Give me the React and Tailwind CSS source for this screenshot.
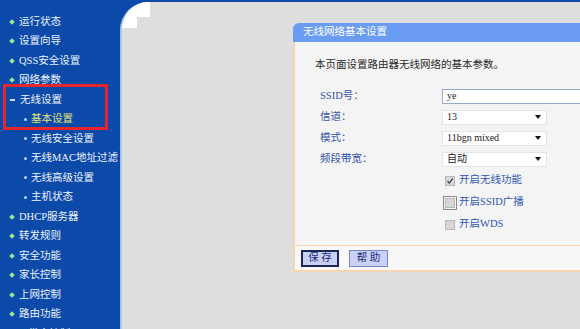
import React from 'react';

const menu = [
  { label: '运行状态', kind: 'top' },
  { label: '设置向导', kind: 'top' },
  { label: 'QSS安全设置', kind: 'top' },
  { label: '网络参数', kind: 'top' },
  { label: '无线设置', kind: 'open' },
  { label: '基本设置', kind: 'sub', active: true },
  { label: '无线安全设置', kind: 'sub' },
  { label: '无线MAC地址过滤', kind: 'sub' },
  { label: '无线高级设置', kind: 'sub' },
  { label: '主机状态', kind: 'sub' },
  { label: 'DHCP服务器', kind: 'top' },
  { label: '转发规则', kind: 'top' },
  { label: '安全功能', kind: 'top' },
  { label: '家长控制', kind: 'top' },
  { label: '上网控制', kind: 'top' },
  { label: '路由功能', kind: 'top' },
  { label: 'IP带宽控制', kind: 'top' },
];

const font = { fontFamily: '"Liberation Serif", "Noto Sans CJK SC", serif' };

const MenuItem = ({ item }) => {
  const isSub = item.kind === 'sub';
  return (
    <div className={`flex items-center h-[19.5px] ${isSub ? 'pl-[24px] gap-[4px]' : 'pl-[10px] gap-[5px]'}`}>
      {item.kind === 'open' && <span className="w-[5px] h-[1.5px] bg-[#cfe0ff]" />}
      {item.kind === 'top' && <span className="w-[4px] h-[4px] rotate-45 bg-[#9ee29a]" />}
      {isSub && <span className="w-[3px] h-[3px] rounded-full bg-[#b9d2f2]" />}
      <span className={`text-[10.5px] leading-none whitespace-nowrap ${item.active ? 'text-[#e2e47a]' : 'text-[#eef3ff]'}`}>
        {item.label}
      </span>
    </div>
  );
};

const Select = ({ value }) => (
  <div className="w-[105px] h-[15px] bg-white border border-[#e4e4e4] flex items-center justify-between pl-[4px] pr-[5px]">
    <span className="text-[10px] leading-none text-[#222]">{value}</span>
    <span className="w-0 h-0 border-l-[3px] border-r-[3px] border-t-[4px] border-l-transparent border-r-transparent border-t-[#111]" />
  </div>
);

const Row = ({ label, children }) => (
  <div className="flex items-center h-[21px]">
    <div className="w-[126px] pl-[4px] text-[10.5px] leading-none text-[#3454aa]">{label}</div>
    {children}
  </div>
);

const Check = ({ label, checked, focused }) => (
  <div className="flex items-center h-[22px] pl-[126px]">
    <div className={`w-[14px] h-[14px] flex items-center justify-center ${focused ? 'border border-[#8a8a8a]' : ''}`}>
      <div className="w-[10px] h-[10px] bg-[#d6d6d6] border border-[#b8b8b8] flex items-center justify-center">
        {checked && (
          <svg width="8" height="8" viewBox="0 0 8 8">
            <path d="M1.5 4.2 L3.2 6 L6.6 1.6" stroke="#333" strokeWidth="1.2" fill="none" />
          </svg>
        )}
      </div>
    </div>
    <span className="ml-[2px] text-[10.5px] leading-none text-[#2f55b5] whitespace-nowrap">{label}</span>
  </div>
);

export default function App() {
  return (
    <div className="w-[580px] h-[329px] overflow-hidden flex bg-[#0b4aa8] relative" style={font}>
      {/* Sidebar */}
      <div className="w-[120px] shrink-0 pt-[12px]">
        {menu.map((m) => (
          <MenuItem key={m.label} item={m} />
        ))}
      </div>

      {/* highlight box */}
      <div className="absolute left-[3px] top-[84px] w-[105px] h-[46px] border-[3px] border-[#e5262d]" />

      {/* Content */}
      <div className="flex-1 pt-[2px] flex">
        <div className="flex-1 relative bg-[#dedede] rounded-tl-[28px] border-l-2 border-[#a9c2ea] pl-[171px] pt-[21px] overflow-hidden">
          <div className="absolute left-0 top-0 w-[28px] h-[15px] bg-white" />
          <div className="absolute left-0 top-0 w-[15px] h-[26px] bg-white" />

          {/* Panel */}
          <div className="relative w-[330px]">
            <div className="h-[19px] bg-[#6a9cf1] rounded-tl-[6px] flex items-center pl-[10px]">
              <span className="text-[10.5px] leading-none text-white">无线网络基本设置</span>
            </div>
            <div className="bg-[#f4f4f4] border-l-2 border-[#f6d6b2] pt-[15px] pb-[10px] h-[203px]">
              <div className="pl-[20px] h-[16px] flex items-center text-[10.5px] leading-none text-[#2a2a2a]">
                本页面设置路由器无线网络的基本参数。
              </div>
              <div className="pl-[21px] mt-[12.5px]">
                <Row label="SSID号：">
                  <div className="flex-1 h-[15px] bg-white border border-[#98a8cc] flex items-center pl-[4px]">
                    <span className="text-[10px] leading-none text-[#222]">ye</span>
                  </div>
                </Row>
                <Row label="信道：">
                  <Select value="13" />
                </Row>
                <Row label="模式：">
                  <Select value="11bgn mixed" />
                </Row>
                <Row label="频段带宽：">
                  <Select value="自动" />
                </Row>
                <div className="pl-[1px]">
                  <Check label="开启无线功能" checked />
                  <Check label="开启SSID广播" focused />
                  <Check label="开启WDS" />
                </div>
              </div>
            </div>
            <div className="bg-[#f8f8f8] border-l-2 border-t border-b-2 border-[#f6d6b2] h-[27px] flex items-center pl-[6px] gap-[10px]">
              <button className="w-[38px] h-[17px] bg-[#c9d1f4] border-2 border-[#1d2656] text-[10.5px] leading-none text-[#1f2a7a]">
                保 存
              </button>
              <button className="w-[39px] h-[17px] bg-[#c9d1f4] border border-[#7685cf] text-[10.5px] leading-none text-[#1f2a7a]">
                帮 助
              </button>
            </div>
          </div>
        </div>
      </div>
    </div>
  );
}
